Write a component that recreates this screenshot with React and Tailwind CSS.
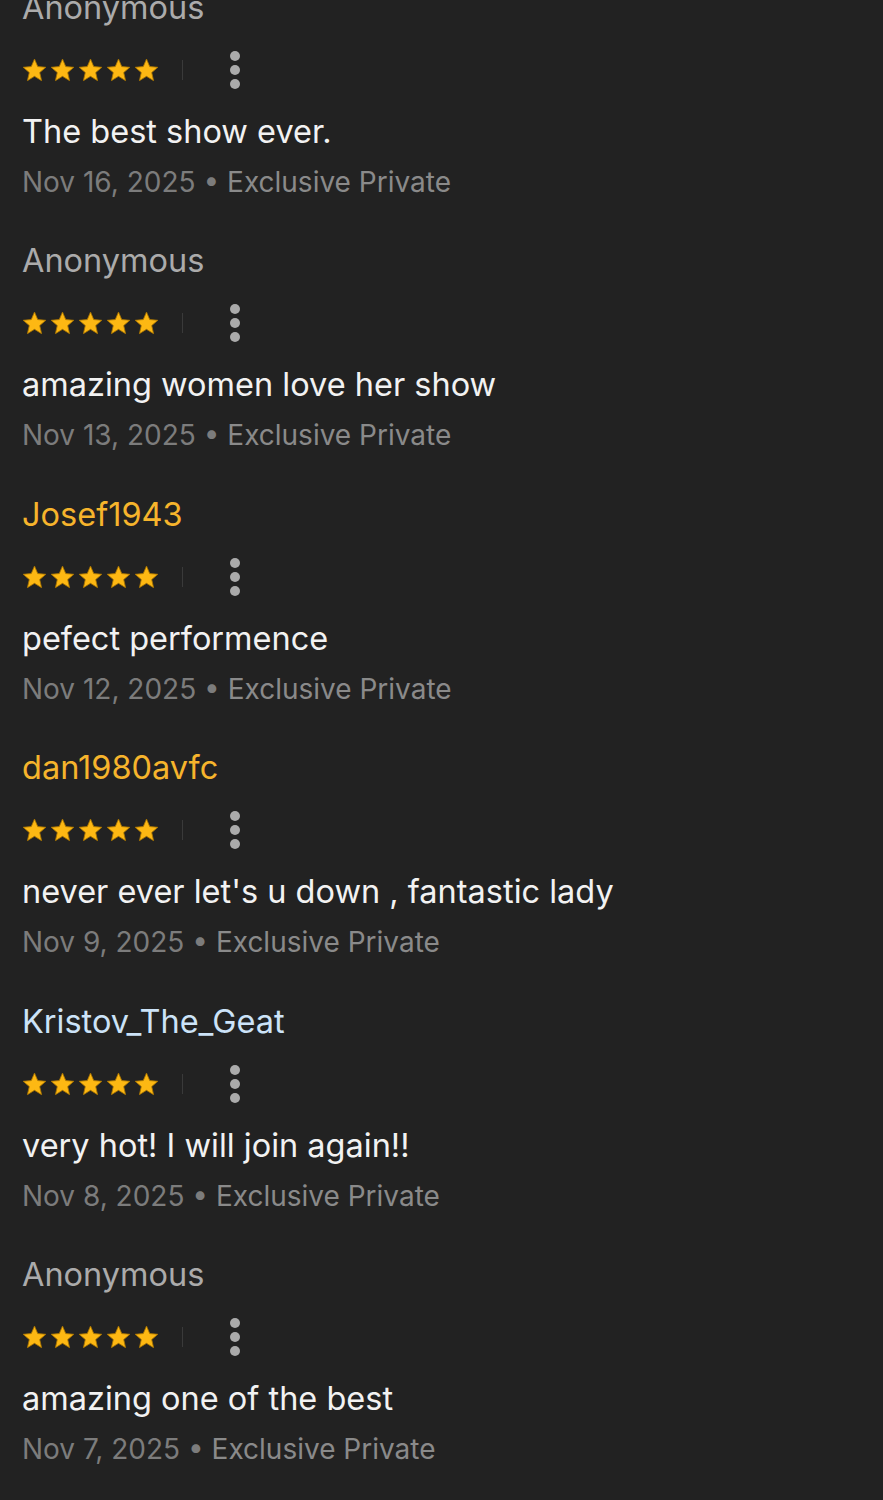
const reviews = [
  { name: "Anonymous", color: "text-[#ababab]", text: "The best show ever.", date: "Nov 16, 2025" },
  { name: "Anonymous", color: "text-[#ababab]", text: "amazing women love her show", date: "Nov 13, 2025" },
  { name: "Josef1943", color: "text-[#f6b42c]", text: "pefect performence", date: "Nov 12, 2025" },
  { name: "dan1980avfc", color: "text-[#f6b42c]", text: "never ever let's u down , fantastic lady", date: "Nov 9, 2025" },
  { name: "Kristov_The_Geat", color: "text-[#cce3f8]", text: "very hot! I will join again!!", date: "Nov 8, 2025" },
  { name: "Anonymous", color: "text-[#ababab]", text: "amazing one of the best", date: "Nov 7, 2025" },
]

const Star = () => (
  <svg width="25" height="24" viewBox="0 0 24 23">
    <polygon
      points="12,1 15.1,8.2 22.9,8.9 17,14 18.8,21.7 12,17.6 5.2,21.7 7,14 1.1,8.9 8.9,8.2"
      fill="#fdb813"
      stroke="#a87400"
      strokeWidth="0.8"
      strokeLinejoin="round"
    />
  </svg>
)

const Review = ({ review }) => (
  <div className="pb-[41.5px]">
    <div className={`text-[32.5px] leading-[40px] ${review.color}`}>{review.name}</div>
    <div className="mt-[22px] flex h-[40px] items-center">
      <div className="flex gap-[3px]">
        {[0, 1, 2, 3, 4].map((i) => (
          <Star key={i} />
        ))}
      </div>
      <div className="ml-[23px] h-[20px] w-[1px] bg-[#3a3a3a]" />
      <div className="ml-[47px] flex flex-col gap-[4px]">
        <span className="block h-[10px] w-[10px] rounded-full bg-[#ababab]" />
        <span className="block h-[10px] w-[10px] rounded-full bg-[#ababab]" />
        <span className="block h-[10px] w-[10px] rounded-full bg-[#ababab]" />
      </div>
    </div>
    <div className="mt-[22px] text-[32.5px] leading-[40px] text-[#f2f2f2]">{review.text}</div>
    <div className="mt-[12px] text-[28px] leading-[36px] text-[#7c7c7c]">
      {review.date} <span className="text-[#7c7c7c]">•</span>{" "}
      <span className="text-[#8a8a8a]">Exclusive Private</span>
    </div>
  </div>
)

export default function App() {
  return (
    <div className="h-[1500px] overflow-hidden bg-[#222222] px-[22px]" style={{ fontFamily: "Inter, 'Noto Sans', sans-serif" }}>
      <div className="-mt-[12.5px]">
        {reviews.map((r, i) => (
          <Review key={i} review={r} />
        ))}
      </div>
    </div>
  )
}
